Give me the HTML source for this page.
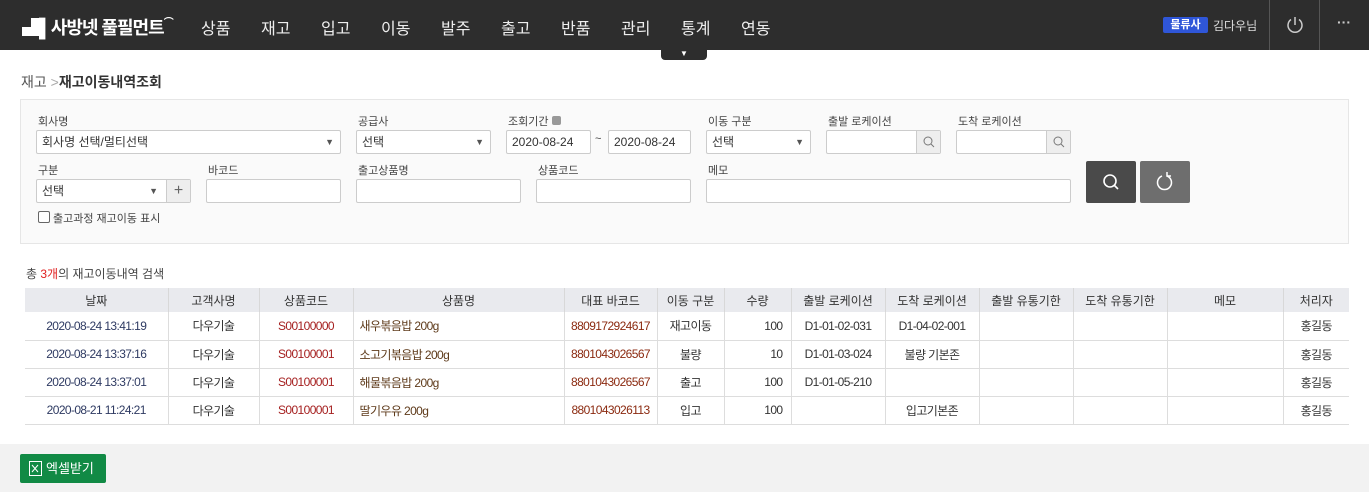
<!DOCTYPE html>
<html><head><meta charset="utf-8"><style>
*{box-sizing:border-box;margin:0;padding:0}
body{width:1369px;height:492px;background:#fff;font-family:"Liberation Sans","Noto Sans CJK KR",sans-serif;font-size:12px;color:#333;position:relative;overflow:hidden}
.nav{position:absolute;left:0;top:0;width:1369px;height:50px;background:#2d2d2d;color:#fff}
.logo{position:absolute;left:22px;top:14px;font-size:18px;font-weight:bold;letter-spacing:-1px}
.menu{position:absolute;top:15px;font-size:16px;color:#eee}
.tab{position:absolute;left:661px;top:50px;width:46px;height:10px;background:#2d2d2d;border-radius:0 0 4px 4px;color:#fff;font-size:8px;text-align:center;line-height:7px}
.a{position:absolute}
.lbl{position:absolute;font-size:11px;color:#444}
.inp{position:absolute;height:24px;background:#fff;border:1px solid #ccc;border-radius:2px;font-size:12px;line-height:22px;padding-left:5px;color:#333}
.arr{position:absolute;right:6px;top:0;font-size:9px;color:#555}
.sbtn{position:absolute;right:0;top:0;width:24px;height:22px;background:#eee;border-left:1px solid #ccc}
table{position:absolute;left:25px;top:288px;width:1324px;border-collapse:collapse;font-size:12px;table-layout:fixed}
th{background:#e9eaee;font-weight:normal;height:24px;border-right:1px solid #d8d8d8;color:#333}
td{height:28px;border-right:1px solid #ddd;border-bottom:1px solid #ddd;text-align:center;color:#333;letter-spacing:-0.6px;white-space:nowrap;overflow:hidden}
th:last-child,td:last-child{border-right:none}
td.d{color:#2e3a62}td.c{color:#a52020}td.p{text-align:left;padding-left:6px;color:#5e3a1a}td.b{color:#8b2a10}
</style></head><body>
<div class="nav">
<div class="logo">▟▌사방넷 풀필먼트<span style="font-size:10px;vertical-align:top">⌒</span></div>
<div class="menu" style="left:201px">상품</div><div class="menu" style="left:261px">재고</div><div class="menu" style="left:321px">입고</div><div class="menu" style="left:381px">이동</div><div class="menu" style="left:441px">발주</div><div class="menu" style="left:501px">출고</div><div class="menu" style="left:561px">반품</div><div class="menu" style="left:621px">관리</div><div class="menu" style="left:681px">통계</div><div class="menu" style="left:741px">연동</div>
<div class="a" style="left:1163px;top:17px;width:45px;height:16px;background:#2f56d8;border-radius:2px;font-size:11px;font-weight:bold;text-align:center;line-height:16px">물류사</div>
<div class="a" style="left:1213px;top:17px;font-size:12px;color:#ddd">김다우님</div>
<div class="a" style="left:1269px;top:0;width:1px;height:50px;background:#555"></div>
<div class="a" style="left:1319px;top:0;width:1px;height:50px;background:#555"></div>
<svg class="a" style="left:1285px;top:15px" width="20" height="20" viewBox="0 0 20 20"><path d="M6 4.5A7 7 0 1 0 14 4.5" fill="none" stroke="#ccc" stroke-width="1.5"/><path d="M10 2V10" stroke="#ccc" stroke-width="1.5"/></svg>
<div class="a" style="left:1337px;top:14px;font-size:14px;font-weight:bold;color:#ccc">···</div>
</div>
<div class="tab">▼</div>
<div class="a" style="left:21px;top:72px;font-size:14px;color:#555">재고 <span style="color:#aaa">&gt;</span><b style="color:#333">재고이동내역조회</b></div>
<div class="a" style="left:20px;top:99px;width:1329px;height:145px;background:#fafafa;border:1px solid #e6e6e6"></div>
<div class="lbl" style="left:38px;top:113px">회사명</div>
<div class="inp" style="left:36px;top:130px;width:305px">회사명 선택/멀티선택<span class="arr">▼</span></div>
<div class="lbl" style="left:358px;top:113px">공급사</div>
<div class="inp" style="left:356px;top:130px;width:135px">선택<span class="arr">▼</span></div>
<div class="lbl" style="left:508px;top:113px">조회기간 <span style="display:inline-block;width:9px;height:9px;background:#999;border-radius:2px"></span></div>
<div class="inp" style="left:506px;top:130px;width:85px">2020-08-24</div>
<div class="lbl" style="left:595px;top:133px">~</div>
<div class="inp" style="left:608px;top:130px;width:83px">2020-08-24</div>
<div class="lbl" style="left:708px;top:113px">이동 구분</div>
<div class="inp" style="left:706px;top:130px;width:105px">선택<span class="arr">▼</span></div>
<div class="lbl" style="left:828px;top:113px">출발 로케이션</div>
<div class="inp" style="left:826px;top:130px;width:115px"><span class="sbtn"><svg width="22" height="22"><circle cx="11" cy="10" r="4" fill="none" stroke="#777"/><path d="M14 13l3 3" stroke="#777"/></svg></span></div>
<div class="lbl" style="left:958px;top:113px">도착 로케이션</div>
<div class="inp" style="left:956px;top:130px;width:115px"><span class="sbtn"><svg width="22" height="22"><circle cx="11" cy="10" r="4" fill="none" stroke="#777"/><path d="M14 13l3 3" stroke="#777"/></svg></span></div>
<div class="lbl" style="left:38px;top:162px">구분</div>
<div class="inp" style="left:36px;top:179px;width:155px">선택<span class="arr" style="right:32px">▼</span><span class="sbtn" style="text-align:center;font-size:16px;color:#666;line-height:21px">+</span></div>
<div class="lbl" style="left:208px;top:162px">바코드</div>
<div class="inp" style="left:206px;top:179px;width:135px"></div>
<div class="lbl" style="left:358px;top:162px">출고상품명</div>
<div class="inp" style="left:356px;top:179px;width:165px"></div>
<div class="lbl" style="left:538px;top:162px">상품코드</div>
<div class="inp" style="left:536px;top:179px;width:155px"></div>
<div class="lbl" style="left:708px;top:162px">메모</div>
<div class="inp" style="left:706px;top:179px;width:365px"></div>
<div class="a" style="left:1086px;top:161px;width:50px;height:42px;background:#4a4a4a;border-radius:2px"><svg width="50" height="42"><circle cx="24" cy="20" r="6" fill="none" stroke="#fff" stroke-width="1.6"/><path d="M28 24l4 4" stroke="#fff" stroke-width="1.6"/></svg></div>
<div class="a" style="left:1140px;top:161px;width:50px;height:42px;background:#6e6e6e;border-radius:2px"><svg width="50" height="42"><path d="M22 15A7 7 0 1 0 27 15" fill="none" stroke="#fff" stroke-width="1.5"/><path d="M27 11v4h4" fill="none" stroke="#fff" stroke-width="1.5"/></svg></div>
<div class="a" style="left:38px;top:211px;width:12px;height:12px;border:1px solid #666;border-radius:2px;background:#fff"></div>
<div class="lbl" style="left:53px;top:210px">출고과정 재고이동 표시</div>
<div class="a" style="left:26px;top:265px;font-size:12px;color:#444">총 <span style="color:#e02020">3개</span>의 재고이동내역 검색</div>
<table>
<tr><th style="width:143px">날짜</th><th style="width:91px">고객사명</th><th style="width:94px">상품코드</th><th style="width:211px">상품명</th><th style="width:93px">대표 바코드</th><th style="width:67px">이동 구분</th><th style="width:67px">수량</th><th style="width:94px">출발 로케이션</th><th style="width:94px">도착 로케이션</th><th style="width:94px">출발 유통기한</th><th style="width:94px">도착 유통기한</th><th style="width:116px">메모</th><th>처리자</th></tr>
<tr><td class="d">2020-08-24 13:41:19</td><td>다우기술</td><td class="c">S00100000</td><td class="p">새우볶음밥 200g</td><td class="b">8809172924617</td><td>재고이동</td><td style="text-align:right;padding-right:8px">100</td><td>D1-01-02-031</td><td>D1-04-02-001</td><td></td><td></td><td></td><td>홍길동</td></tr>
<tr><td class="d">2020-08-24 13:37:16</td><td>다우기술</td><td class="c">S00100001</td><td class="p">소고기볶음밥 200g</td><td class="b">8801043026567</td><td>불량</td><td style="text-align:right;padding-right:8px">10</td><td>D1-01-03-024</td><td>불량 기본존</td><td></td><td></td><td></td><td>홍길동</td></tr>
<tr><td class="d">2020-08-24 13:37:01</td><td>다우기술</td><td class="c">S00100001</td><td class="p">해물볶음밥 200g</td><td class="b">8801043026567</td><td>출고</td><td style="text-align:right;padding-right:8px">100</td><td>D1-01-05-210</td><td></td><td></td><td></td><td></td><td>홍길동</td></tr>
<tr><td class="d">2020-08-21 11:24:21</td><td>다우기술</td><td class="c">S00100001</td><td class="p">딸기우유 200g</td><td class="b">8801043026113</td><td>입고</td><td style="text-align:right;padding-right:8px">100</td><td></td><td>입고기본존</td><td></td><td></td><td></td><td>홍길동</td></tr>
</table>
<div class="a" style="left:0;top:444px;width:1369px;height:48px;background:#f2f2f2"></div>
<div class="a" style="left:20px;top:454px;width:86px;height:29px;background:#118a45;border-radius:2px;color:#fff;font-size:13px;line-height:29px;padding-left:26px">엑셀받기</div>
<svg class="a" style="left:28px;top:460px" width="16" height="18"><rect x="1.5" y="1.5" width="12" height="14" fill="none" stroke="#fff"/><path d="M4 5l6 7M10 5l-6 7" stroke="#fff"/></svg>
</body></html>
